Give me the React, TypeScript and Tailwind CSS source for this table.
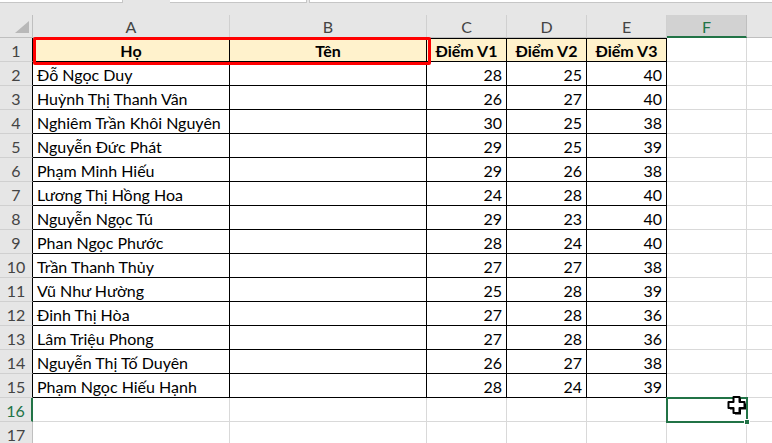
import React from 'react';

const rows: [string, number, number, number][] = [
    ['Đỗ Ngọc Duy', 28, 25, 40],
    ['Huỳnh Thị Thanh Vân', 26, 27, 40],
    ['Nghiêm Trần Khôi Nguyên', 30, 25, 38],
    ['Nguyễn Đức Phát', 29, 25, 39],
    ['Phạm Minh Hiếu', 29, 26, 38],
    ['Lương Thị Hồng Hoa', 24, 28, 40],
    ['Nguyễn Ngọc Tú', 29, 23, 40],
    ['Phan Ngọc Phước', 28, 24, 40],
    ['Trần Thanh Thủy', 27, 27, 38],
    ['Vũ Như Hường', 25, 28, 39],
    ['Đinh Thị Hòa', 27, 28, 36],
    ['Lâm Triệu Phong', 27, 28, 36],
    ['Nguyễn Thị Tố Duyên', 26, 27, 38],
    ['Phạm Ngọc Hiếu Hạnh', 28, 24, 39],
];

const cols = ['A', 'B', 'C', 'D', 'E', 'F'];

const rowHead = 'flex items-center justify-center h-[24px] pt-[2px] bg-[#e6e6e6] border-b border-b-[#d0d0d0] text-[#444]';
const cell = 'h-[24px] border-b border-r flex items-center pt-[2px] px-[4px] whitespace-nowrap overflow-hidden';

const App: React.FC = () => {
    return (
        <div className="w-[772px] h-[443px] overflow-hidden bg-white text-[16px] leading-none text-black" style={{ fontFamily: 'Lato, "Liberation Sans", sans-serif' }}>
            {/* formula bar remnant */}
            <div className="h-[15px] bg-[#e6e6e6] flex items-start">
                <div className="w-[123px] h-[3px] bg-white border-b border-r border-[#c6c6c6]" />
                <div className="w-[47px]" />
                <div className="w-[137px] h-[3px] bg-white border-b border-r border-[#c6c6c6]" />
                <div className="w-[2px]" />
                <div className="flex-1 h-[3px] bg-white border-b border-l border-[#c6c6c6]" />
            </div>

            <div className="relative">
                <div className="grid grid-cols-[33px_197px_197px_80px_80px_80px_80px_1fr]">
                    {/* column headers */}
                    <div className="relative h-[23px] bg-[#e6e6e6] border-b border-r border-[#bfbfbf]">
                        <svg className="absolute left-[15px] top-[6px]" width="14" height="12" viewBox="0 0 14 12">
                            <polygon points="0,12 14,12 14,0" fill="#b8b8b8" />
                        </svg>
                    </div>
                    {cols.map((c) => (
                        <div
                            key={c}
                            className={
                                c === 'F'
                                    ? 'h-[23px] flex items-center justify-center pt-[2px] bg-[#d2d2d2] border-b-2 border-b-[#217346] border-r border-r-[#bfbfbf] text-[#217346]'
                                    : 'h-[23px] flex items-center justify-center pt-[2px] bg-[#e6e6e6] border-b border-b-[#bfbfbf] border-r border-r-[#d0d0d0] text-[#444]'
                            }
                        >
                            {c}
                        </div>
                    ))}
                    <div className="h-[23px] bg-[#e6e6e6] border-b border-[#bfbfbf]" />

                    {/* row 1 */}
                    <div className={`${rowHead} border-r border-r-black`}>1</div>
                    <div className={`${cell} border-black bg-[#fff2cc] justify-center font-bold`}>Họ</div>
                    <div className={`${cell} border-black bg-[#fff2cc] justify-center font-bold`}>Tên</div>
                    {['Điểm V1', 'Điểm V2', 'Điểm V3'].map((h) => (
                        <div key={h} className={`${cell} border-black bg-[#fff2cc] justify-center font-bold shadow-[inset_0_1px_0_#000] px-0`}>
                            {h}
                        </div>
                    ))}
                    <div className={`${cell} border-[#d9d9d9]`} />
                    <div className={`${cell} border-[#d9d9d9] border-r-0`} />

                    {rows.map(([name, a, b, c], i) => (
                        <React.Fragment key={name}>
                            <div className={`${rowHead} border-r border-r-black`}>{i + 2}</div>
                            <div className={`${cell} border-black`}>{name}</div>
                            <div className={`${cell} border-black`} />
                            <div className={`${cell} border-black justify-end`}>{a}</div>
                            <div className={`${cell} border-black justify-end`}>{b}</div>
                            <div className={`${cell} border-black justify-end`}>{c}</div>
                            <div className={`${cell} border-[#d9d9d9]`} />
                            <div className={`${cell} border-[#d9d9d9] border-r-0`} />
                        </React.Fragment>
                    ))}

                    {/* rows 16, 17 */}
                    <div className={`${rowHead} bg-[#d2d2d2] border-r-2 border-r-[#217346] text-[#217346]`}>16</div>
                    {[0, 1, 2, 3, 4, 5].map((k) => (
                        <div key={k} className={`${cell} border-[#d9d9d9]`} />
                    ))}
                    <div className={`${cell} border-[#d9d9d9] border-r-0`} />
                    <div className={`${rowHead} border-r border-r-[#bfbfbf]`}>17</div>
                    {[0, 1, 2, 3, 4, 5].map((k) => (
                        <div key={k} className={`${cell} border-[#d9d9d9]`} />
                    ))}
                    <div className={`${cell} border-[#d9d9d9] border-r-0`} />
                </div>

                {/* red highlight around A1:B1 */}
                <div className="absolute left-[33px] top-[22px] w-[398px] h-[28px] border-[3px] border-[#ff0000] rounded-[2px] pointer-events-none" />

                {/* active cell F16 */}
                <div className="absolute left-[666px] top-[382px] w-[82px] h-[26px] border-2 border-[#217346] pointer-events-none">
                    <div className="absolute right-[-4px] bottom-[-4px] w-[6px] h-[6px] bg-[#217346] border border-white" />
                </div>

                {/* mouse cursor */}
                <svg className="absolute left-[727px] top-[380px]" width="20" height="20" viewBox="0 0 20 20">
                    <path d="M6.5 2h6v5h5v6h-5v5h-6v-5h-5V7h5z" fill="#000" transform="translate(1.5 1.5)" />
                    <path d="M6.5 2h6v5h5v6h-5v5h-6v-5h-5V7h5z" fill="#fff" stroke="#000" strokeWidth="2" strokeLinejoin="round" />
                </svg>
            </div>
        </div>
    );
};

export default App;
